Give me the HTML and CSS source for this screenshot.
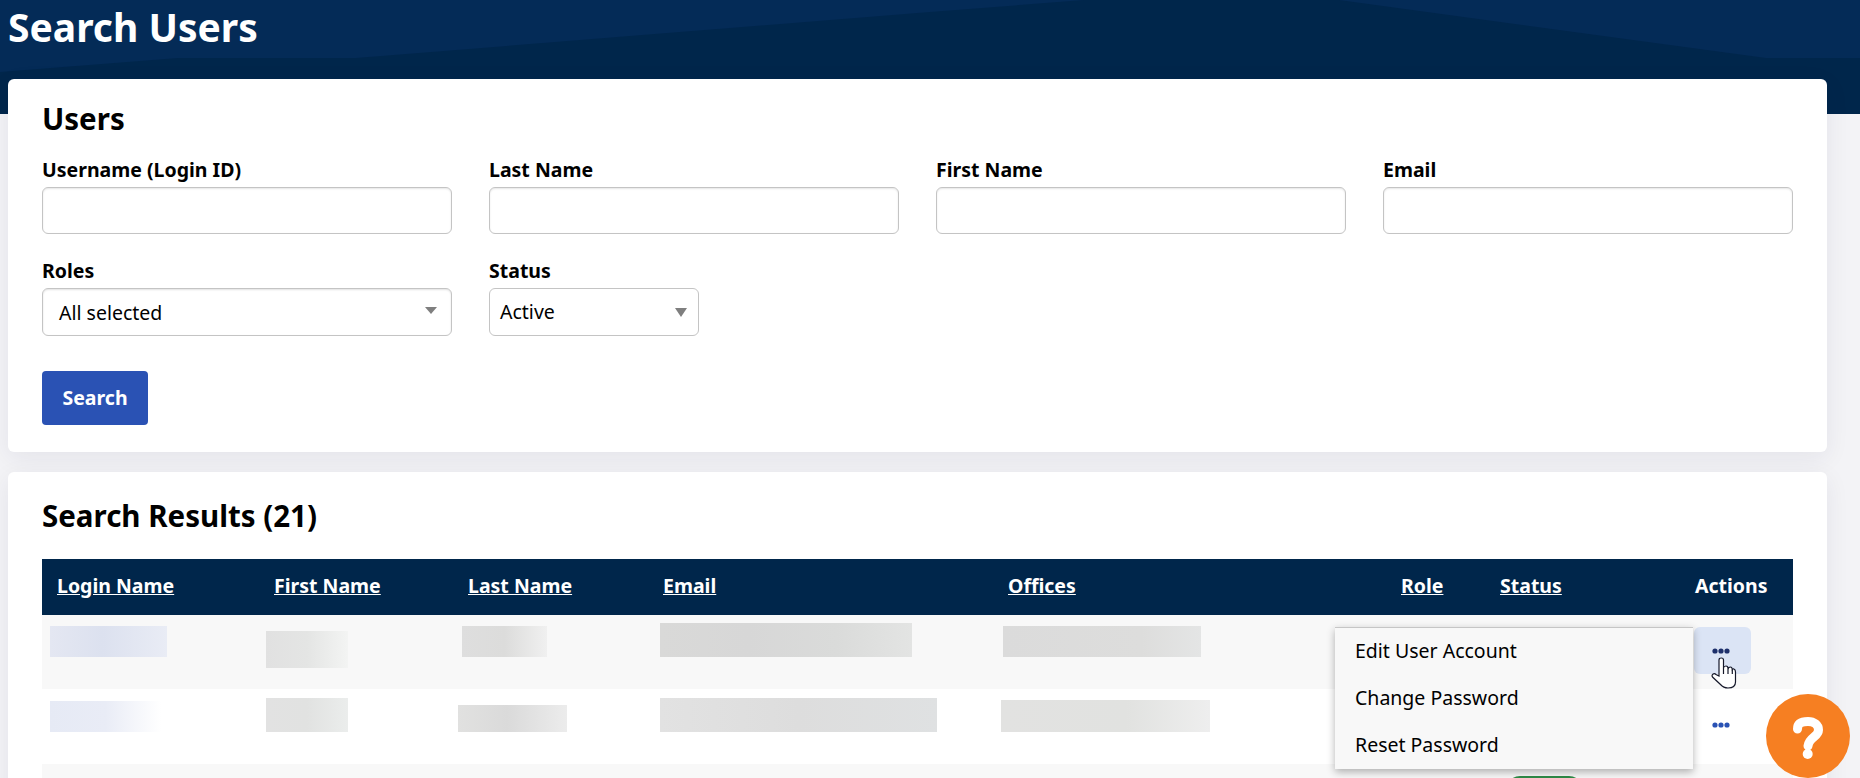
FILE: index.html
```html
<!DOCTYPE html>
<html lang="en">
<head>
<meta charset="utf-8">
<title>Search Users</title>
<link rel="stylesheet" href="styles.css">
</head>
<body>
<header class="hero">
  <svg class="hero-bg" viewBox="0 0 1860 114" preserveAspectRatio="none" aria-hidden="true">
    <polygon class="hero-shape" points="0,0 1084,0 930,12 356,58 178,58 0,72"/>
    <polygon class="hero-shape" points="1339,0 1860,0 1860,58 1766,58"/>
  </svg>
  <h1 class="hero-title">Search Users</h1>
</header>
<main class="page">
  <section class="card card-search">
    <h2 class="card-title">Users</h2>
    <form class="filters">
      <div class="field"><label class="field-label" for="f-user">Username (Login ID)</label><input class="control" id="f-user" type="text"></div>
      <div class="field"><label class="field-label" for="f-last">Last Name</label><input class="control" id="f-last" type="text"></div>
      <div class="field"><label class="field-label" for="f-first">First Name</label><input class="control" id="f-first" type="text"></div>
      <div class="field"><label class="field-label" for="f-email">Email</label><input class="control" id="f-email" type="text"></div>
      <div class="field"><span class="field-label">Roles</span><div class="select select-roles">All selected</div></div>
      <div class="field"><span class="field-label">Status</span><div class="select select-status">Active</div></div>
    </form>
    <button class="btn-search" type="button">Search</button>
  </section>
  <section class="card card-results">
    <h2 class="card-title">Search Results (21)</h2>
    <div class="table-wrap">
      <table class="results">
        <thead>
          <tr>
            <th class="c-login"><a href="#">Login Name</a></th>
            <th class="c-first"><a href="#">First Name</a></th>
            <th class="c-last"><a href="#">Last Name</a></th>
            <th class="c-email"><a href="#">Email</a></th>
            <th class="c-offices"><a href="#">Offices</a></th>
            <th class="c-role"><a href="#">Role</a></th>
            <th class="c-status"><a href="#">Status</a></th>
            <th class="c-actions">Actions</th>
          </tr>
        </thead>
        <tbody>
          <tr class="row row-odd">
            <td><div class="blur r1-login"></div></td>
            <td><div class="blur r1-first"></div></td>
            <td><div class="blur r1-last"></div></td>
            <td><div class="blur r1-email"></div></td>
            <td><div class="blur r1-offices"></div></td>
            <td></td>
            <td></td>
            <td><button class="btn-more is-active" type="button"><svg class="dots" viewBox="0 0 18 6" aria-hidden="true"><circle cx="3" cy="3" r="2.6"/><circle cx="9" cy="3" r="2.6"/><circle cx="15" cy="3" r="2.6"/></svg></button></td>
          </tr>
          <tr class="row">
            <td><div class="blur r2-login"></div></td>
            <td><div class="blur r2-first"></div></td>
            <td><div class="blur r2-last"></div></td>
            <td><div class="blur r2-email"></div></td>
            <td><div class="blur r2-offices"></div></td>
            <td></td>
            <td></td>
            <td><button class="btn-more" type="button"><svg class="dots" viewBox="0 0 18 6" aria-hidden="true"><circle cx="3" cy="3" r="2.6"/><circle cx="9" cy="3" r="2.6"/><circle cx="15" cy="3" r="2.6"/></svg></button></td>
          </tr>
          <tr class="row row-odd">
            <td></td><td></td><td></td><td></td><td></td><td></td>
            <td><span class="badge"></span></td>
            <td></td>
          </tr>
        </tbody>
      </table>
      <ul class="menu">
        <li class="menu-item">Edit User Account</li>
        <li class="menu-item">Change Password</li>
        <li class="menu-item">Reset Password</li>
      </ul>
      <svg class="cursor" viewBox="0 0 26 32" aria-hidden="true">
        <path d="M8 19V3Q8 1 10.3 1Q12.5 1 12.5 3V11Q12.8 9 15 9Q17 9 17 11.5V12Q17.5 10 19.5 10Q21 10 21.3 12.5Q22 11.5 23 12Q24.5 12.7 24.5 15V25Q24.5 31 17 31Q12.5 31 9.5 27.5L1.5 20Q.5 18.5 1.8 17.2Q3.5 16 5 17.5Z"/>
        <path d="M12.5 11V17M17 12V17M21.3 12.5V17"/>
      </svg>
    </div>
  </section>
</main>
<button class="help" type="button" aria-label="Help">
  <svg viewBox="0 0 84 84" aria-hidden="true">
    <path class="help-hook" d="M31.5 35C31.5 29 36 27.5 42 27.5C48 27.5 52.5 31 52.5 36C52.5 43 43 43 42 52"/>
    <circle class="help-dot" cx="41.7" cy="60" r="5"/>
  </svg>
</button>
</body>
</html>
```
FILE: styles.css
```css
* { box-sizing: border-box; }
html, body { height: 778px; overflow: hidden; }
body {
  margin: 0;
  background: #f3f3f6;
  color: #000;
  font-family: "Noto Sans", "Open Sans", "Liberation Sans", sans-serif;
  font-size: 19.5px;
}
.hero {
  position: relative;
  height: 114px;
  background: #00264b;
}
.hero-bg { position: absolute; inset: 0; width: 100%; height: 100%; }
.hero-shape { fill: #042b57; }
.hero-title {
  position: relative;
  margin: 0;
  padding-left: 8px;
  color: #fff;
  font-size: 39px;
  font-weight: 700;
  line-height: 53px;
}
.page {
  margin: -35px 33px 0 8px;
  display: flex;
  flex-direction: column;
  gap: 20px;
  position: relative;
}
.card {
  background: #fff;
  border-radius: 6px;
  padding: 21px 35px 27px 34px;
  box-shadow: 0 6px 24px rgba(30, 30, 70, .07);
}
.card-title {
  margin: 0 0 20px;
  font-size: 29.5px;
  font-weight: 700;
  line-height: 38px;
}
.filters {
  display: grid;
  grid-template-columns: repeat(4, 410px);
  column-gap: 37px;
  row-gap: 25px;
}
.field { display: flex; flex-direction: column; gap: 5px; }
.field-label { font-weight: 700; line-height: 24px; }
.control {
  height: 47px;
  border: 1px solid #c4c4c4;
  border-radius: 6px;
  background: #fff;
  box-shadow: inset 0 1px 2px rgba(0, 0, 0, .1);
  font: inherit;
}
.select {
  position: relative;
  display: flex;
  align-items: center;
  height: 48px;
  border: 1px solid #c4c4c4;
  border-radius: 6px;
  background: #fff;
  line-height: 24px;
}
.select::after {
  content: "";
  position: absolute;
  width: 0;
  height: 0;
  border-style: solid;
  border-color: #7f7f7f transparent transparent;
}
.select-roles { padding: 2px 0 0 16px; box-shadow: inset 0 1px 2px rgba(0, 0, 0, .12); }
.select-roles::after { right: 14px; top: 18px; border-width: 7px 6px 0; }
.select-status { width: 210px; padding-left: 10px; }
.select-status::after { right: 11px; top: 19px; border-width: 9px 6px 0; }
.btn-search {
  display: block;
  width: 106px;
  height: 54px;
  margin-top: 35px;
  padding: 0 0 2px;
  border: 0;
  border-radius: 4px;
  background: #2a52b4;
  color: #fff;
  font: 700 19.5px "Noto Sans", sans-serif;
}
.card-results { padding-top: 25px; padding-bottom: 0; height: 400px; }
.card-results .card-title { margin-bottom: 24px; }
.table-wrap { position: relative; }
.results {
  width: 1751px;
  border-collapse: collapse;
  table-layout: fixed;
}
.results th {
  height: 56px;
  padding: 0 0 4px 15px;
  background: #00264b;
  color: #fff;
  text-align: left;
  font-weight: 700;
  font-size: 19.5px;
}
.results th a { color: inherit; }
.c-login { width: 217px; }
.c-first { width: 194px; }
.c-last { width: 195px; }
.c-email { width: 345px; }
.c-offices { width: 393px; }
.c-role { width: 99px; }
.c-status { width: 195px; }
.c-actions { width: 113px; }
.row { height: 75px; background: #fff; }
.row-odd { background: #f8f8f8; }
.row:first-child { height: 74px; }
.row td { padding: 0; vertical-align: top; }
.blur { height: 31px; }
.r1-login { width: 117px; margin: 11px 0 0 8px; background: linear-gradient(90deg, #e4e7f2, #dce1ef 45%, #e9ecf5); }
.r1-first { width: 82px; height: 37px; margin: 16px 0 0 7px; background: linear-gradient(90deg, #e1e1e1, #e4e5e4 50%, #f3f4f3); }
.r1-last { width: 85px; margin: 11px 0 0 9px; background: linear-gradient(90deg, #dedede, #dcdcdb 50%, #f0f0f0); }
.r1-email { width: 252px; height: 34px; margin: 8px 0 0 12px; background: linear-gradient(90deg, #d9d9d8, #d7d7d7 35%, #dadbda 70%, #e3e4e3); }
.r1-offices { width: 198px; margin: 11px 0 0 10px; background: linear-gradient(90deg, #dbdbdb, #dddddc 70%, #e4e5e5); }
.r2-login { width: 111px; margin: 12px 0 0 8px; background: linear-gradient(90deg, #e6eaf5, #e9ecf6 50%, #fff); }
.r2-first { width: 82px; height: 34px; margin: 9px 0 0 7px; background: linear-gradient(90deg, #e2e2e2, #e1e2e1 50%, #ebedec); }
.r2-last { width: 109px; height: 27px; margin: 16px 0 0 5px; background: linear-gradient(90deg, #e1e1e0, #dadada 45%, #ececec); }
.r2-email { width: 277px; height: 34px; margin: 9px 0 0 12px; background: linear-gradient(90deg, #e2e2e2, #dddddd 50%, #dfe1e2); }
.r2-offices { width: 209px; height: 32px; margin: 11px 0 0 8px; background: linear-gradient(90deg, #e2e2e1, #e1e2e0 60%, #eeeeee); }
.btn-more {
  display: flex;
  align-items: center;
  justify-content: center;
  width: 57px;
  height: 47px;
  margin: 12px 0 0 14px;
  padding: 0 4px 0 0;
  border: 0;
  border-radius: 6px;
  background: transparent;
}
.btn-more.is-active { background: #dbe4f5; }
.dots { width: 18px; height: 6px; fill: #2a52b4; }
.is-active .dots { fill: #1d2f6b; }
.badge {
  display: block;
  width: 77px;
  height: 30px;
  margin: 12px 0 0 21px;
  border: 2px solid #2e8b47;
  border-radius: 14px;
  background: #eef7f0;
}
.menu {
  position: absolute;
  left: 1293px;
  top: 68px;
  width: 358px;
  margin: 0;
  padding: 0;
  list-style: none;
  background: #f8f8f8;
  border-top: 1px solid #c6c6c6;
  box-shadow: 0 3px 8px rgba(0, 0, 0, .3);
}
.menu-item {
  height: 47px;
  padding-left: 20px;
  line-height: 45px;
}
.cursor {
  position: absolute;
  left: 1669px;
  top: 98px;
  width: 26px;
  height: 32px;
  fill: #fff;
  stroke: #15182a;
  stroke-width: 1.2;
}
.help {
  position: fixed;
  left: 1766px;
  top: 694px;
  width: 84px;
  height: 84px;
  padding: 0;
  border: 0;
  border-radius: 50%;
  background: #f67f22;
}
.help svg { display: block; width: 84px; height: 84px; }
.help-hook { fill: none; stroke: #fff; stroke-width: 9; stroke-linecap: round; }
.help-dot { fill: #fff; }
```
